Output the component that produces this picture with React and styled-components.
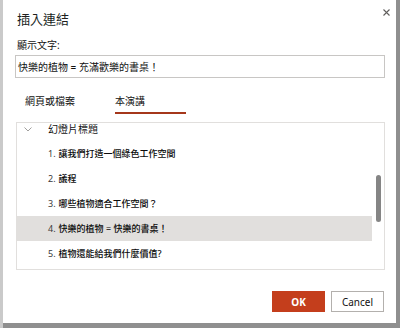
import React from "react";
import styled, { createGlobalStyle } from "styled-components";

const Global = createGlobalStyle`
  html, body { margin: 0; padding: 0; }
  body {
    width: 400px;
    height: 328px;
    overflow: hidden;
    font-family: "Noto Sans", "Noto Sans CJK TC", sans-serif;
    color: #201f1e;
  }
`;

const Backdrop = styled.div`
  width: 400px;
  height: 328px;
  box-sizing: border-box;
  display: flex;
  padding: 0 4px 5px 0;
  border-left: 3px solid #cacaca;
  background: #8f8f8f;
`;

const Dialog = styled.div`
  flex: 1;
  background: #ffffff;
  box-sizing: border-box;
  padding: 9px 11px 0 12px;
  display: flex;
  flex-direction: column;
`;

const TitleRow = styled.div`
  display: flex;
  justify-content: space-between;
  align-items: flex-start;
`;

const Title = styled.h1`
  margin: 0;
  padding-left: 2px;
  font-size: 13px;
  line-height: 20px;
  font-weight: 400;
  color: #201f1e;
`;

const CloseButton = styled.button`
  border: none;
  background: none;
  padding: 0;
  margin: 0 -5px 0 0;
  width: 7px;
  height: 7px;
  display: flex;
`;

const Label = styled.label`
  margin-top: 9px;
  padding-left: 2px;
  font-size: 10px;
  line-height: 14px;
  color: #111;
`;

const TextInput = styled.div`
  margin-top: 3px;
  height: 23px;
  box-sizing: border-box;
  border: 1px solid #c8c6c4;
  padding: 0 2px;
  font-size: 10px;
  display: flex;
  align-items: center;
  color: #111;
`;

const Tabs = styled.div`
  margin-top: 14px;
  padding-left: 10px;
  display: flex;
`;

const Tab = styled.div`
  width: ${(p) => p.$width}px;
  font-size: 10px;
  line-height: 18px;
  padding-bottom: 2px;
  color: #111;
  border-bottom: 2px solid ${(p) => (p.$active ? "#a5371b" : "transparent")};
`;

const ListBox = styled.div`
  margin: 8px 0 0 1px;
  height: 148px;
  box-sizing: border-box;
  border: 1px solid #e1dfdd;
  position: relative;
  overflow: hidden;
`;

const Rows = styled.div`
  margin-right: 12px;
  display: flex;
  flex-direction: column;
`;

const HeaderRow = styled.div`
  height: 18px;
  display: flex;
  align-items: flex-start;
  padding-left: 7px;
  gap: 16px;
  font-size: 10px;
  line-height: 12px;
  color: #111;
`;

const Chevron = styled.svg`
  margin-top: 4px;
`;

const Row = styled.div`
  height: 25px;
  display: flex;
  align-items: center;
  padding-left: 31px;
  font-size: 9px;
  font-weight: 500;
  background: ${(p) => (p.$selected ? "#e1dfdd" : "transparent")};
  color: #0a0a0a;
`;

const Num = styled.span`
  margin-right: 3px;
  font-weight: 400;
  color: #3b3a39;
`;

const Thumb = styled.div`
  position: absolute;
  left: 359px;
  top: 52px;
  width: 5px;
  height: 47px;
  border-radius: 3px;
  background: #858585;
`;

const Footer = styled.div`
  margin-top: 21px;
  margin-right: 1px;
  display: flex;
  justify-content: flex-end;
  gap: 6px;
`;

const Button = styled.button`
  width: 53px;
  height: 21px;
  box-sizing: border-box;
  font-family: inherit;
  font-size: 10px;
  padding: 0;
  border: 1px solid ${(p) => (p.$primary ? "#c43e1c" : "#b3b0ad")};
  background: ${(p) => (p.$primary ? "#c43e1c" : "#ffffff")};
  color: ${(p) => (p.$primary ? "#ffffff" : "#111")};
  font-weight: ${(p) => (p.$primary ? 700 : 400)};
`;

const items = [
  "讓我們打造一個綠色工作空間",
  "議程",
  "哪些植物適合工作空間？",
  "快樂的植物 = 快樂的書桌！",
  "植物還能給我們什麼價值?",
];

export default function App() {
  return (
    <>
      <Global />
      <Backdrop>
        <Dialog>
          <TitleRow>
            <Title>插入連結</Title>
            <CloseButton aria-label="close">
              <svg width="7" height="7" viewBox="0 0 7 7">
                <path d="M0.5 0.5 L6.5 6.5 M6.5 0.5 L0.5 6.5" stroke="#605e5c" strokeWidth="1.1" fill="none" />
              </svg>
            </CloseButton>
          </TitleRow>
          <Label>顯示文字:</Label>
          <TextInput>快樂的植物 = 充滿歡樂的書桌！</TextInput>
          <Tabs>
            <Tab $width={90}>網頁或檔案</Tab>
            <Tab $width={71} $active>本演講</Tab>
          </Tabs>
          <ListBox>
            <Rows>
              <HeaderRow>
                <Chevron width="8" height="5" viewBox="0 0 8 5">
                  <polyline points="0.5,0.5 4,4 7.5,0.5" stroke="#a19f9d" strokeWidth="1" fill="none" />
                </Chevron>
                <span>幻燈片標題</span>
              </HeaderRow>
              {items.map((t, i) => (
                <Row key={i} $selected={i === 3}>
                  <Num>{i + 1}.</Num>
                  {t}
                </Row>
              ))}
            </Rows>
            <Thumb />
          </ListBox>
          <Footer>
            <Button $primary>OK</Button>
            <Button>Cancel</Button>
          </Footer>
        </Dialog>
      </Backdrop>
    </>
  );
}
